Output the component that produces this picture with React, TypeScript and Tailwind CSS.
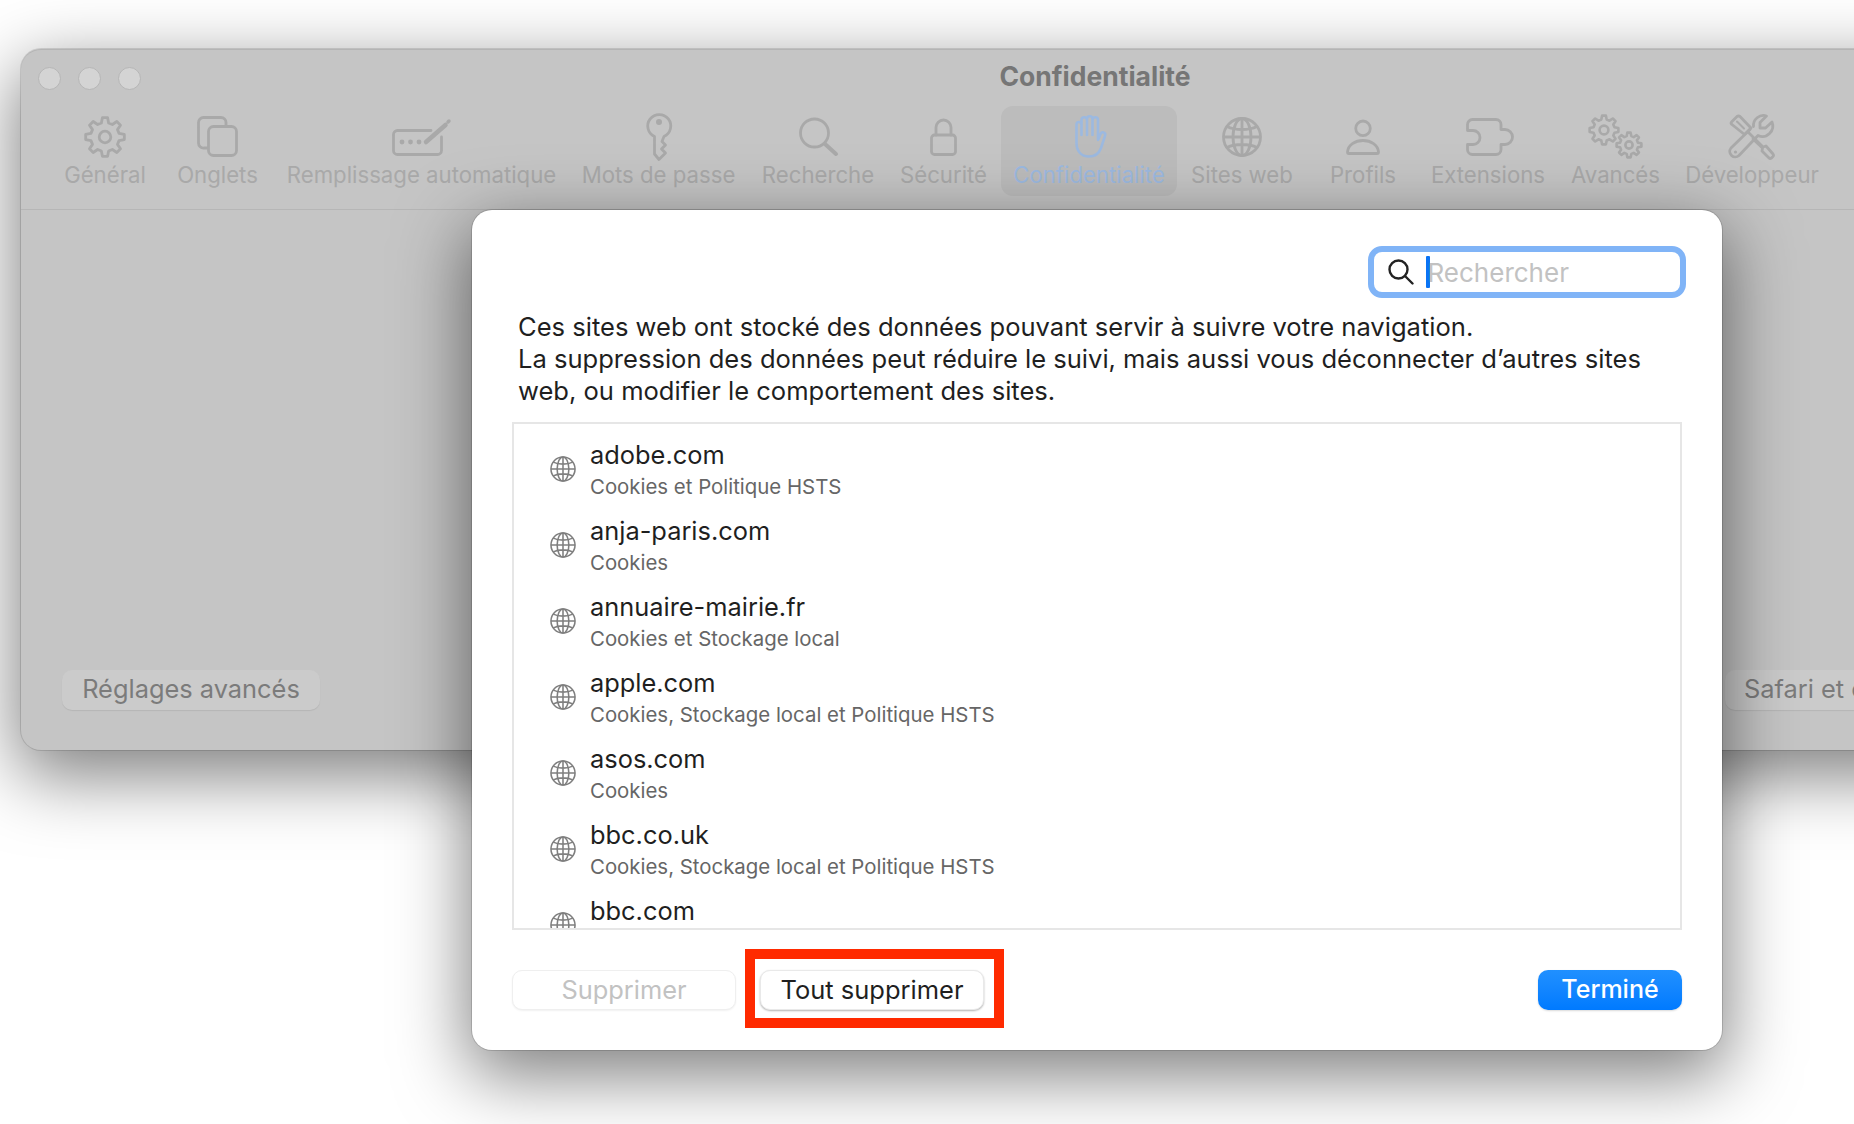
import React from "react";

function gearPath(cx: number, cy: number, R: number, r: number, teeth = 8) {
  const step = (Math.PI * 2) / teeth;
  const pts: string[] = [];
  for (let i = 0; i < teeth; i++) {
    const a = -Math.PI / 2 + i * step;
    const offs: [number, number][] = [
      [r, -0.32],
      [R, -0.17],
      [R, 0.17],
      [r, 0.32],
    ];
    for (const [rad, o] of offs) {
      const t = a + o * step;
      pts.push(`${(cx + rad * Math.cos(t)).toFixed(2)} ${(cy + rad * Math.sin(t)).toFixed(2)}`);
    }
  }
  return "M" + pts.join("L") + "Z";
}

type SvgP = { w: number; h: number; sw?: number; children: React.ReactNode };
function Ico({ w, h, sw = 2.8, children }: SvgP) {
  return (
    <svg
      width={w}
      height={h}
      viewBox={`0 0 ${w} ${h}`}
      fill="none"
      stroke="currentColor"
      strokeWidth={sw}
      strokeLinecap="round"
      strokeLinejoin="round"
      className="overflow-visible"
    >
      {children}
    </svg>
  );
}

const GearIcon = () => (
  <Ico w={42} h={42}>
    <path d={gearPath(21, 21, 19.5, 14.5)} />
    <circle cx={21} cy={21} r={5.8} />
  </Ico>
);
const TabsIcon = () => (
  <Ico w={41} h={41}>
    <path d="M10.5 32 H7 a5 5 0 0 1 -5.5 -5 V6.5 a5 5 0 0 1 5 -5 H24 a5 5 0 0 1 5 5 V10.5" />
    <rect x={11.5} y={10.5} width={28} height={29} rx={5} />
  </Ico>
);
const AutofillIcon = () => (
  <Ico w={59} h={39}>
    <path d="M39 13.5 H5.5 a4 4 0 0 0 -4 4 V33.5 a4 4 0 0 0 4 4 H45.5 a4 4 0 0 0 4 -4 V20" />
    <path d="M34 25 L53.5 8" strokeWidth={4.5} />
    <path d="M56 5 L57 4" strokeWidth={3.5} />
    <g fill="currentColor" stroke="none">
      <circle cx={10} cy={25} r={2.4} />
      <circle cx={18.5} cy={25} r={2.4} />
      <circle cx={27} cy={25} r={2.4} />
    </g>
  </Ico>
);
const KeyIcon = () => (
  <Ico w={26} h={48}>
    <path d="M8.5 23.5 V41 L13 46.5 L19.5 40 L15.5 36 L19.5 32 L16 28.5 L18 23.5 A11.5 11.5 0 1 0 8.5 23.5 Z" />
    <circle cx={13} cy={9} r={3} fill="currentColor" stroke="none" />
  </Ico>
);
const SearchBigIcon = () => (
  <Ico w={39} h={39}>
    <circle cx={15.5} cy={16} r={14} />
    <path d="M26 27 L37 37" strokeWidth={4} />
  </Ico>
);
const LockIcon = () => (
  <Ico w={27} h={38}>
    <rect x={1.5} y={17} width={24} height={19.5} rx={3} />
    <path d="M6 17 V9.5 a7.5 7.5 0 0 1 15 0 V17" />
  </Ico>
);
const HandIcon = () => (
  <Ico w={36} h={43} sw={2.6}>
    <path
      transform="translate(4 0)"
      d="M1.5 28 V9.5 a2.5 2.5 0 0 1 5 0 V20 M6.5 9 V5 a2.7 2.7 0 0 1 5.5 0 V20 M12 5 V4 a2.7 2.7 0 0 1 5.5 0 V20 M17.5 5 a2.7 2.7 0 0 1 5.5 0 V25 L25.5 19 a2.4 2.4 0 0 1 4.6 1.5 L26 33 C24 38.5 20 41.5 14 41.5 C6 41.5 1.5 36 1.5 28"
    />
  </Ico>
);
const GlobeIcon = ({ size = 40, sw = 2.8 }: { size?: number; sw?: number }) => (
  <svg width={size} height={size} viewBox="0 0 40 40" fill="none" stroke="currentColor" strokeWidth={sw}>
    <circle cx={20} cy={20} r={18.5} />
    <ellipse cx={20} cy={20} rx={9} ry={18.5} />
    <path d="M20 1.5 V38.5 M1.5 20 H38.5 M5 9.5 C13 13.5 27 13.5 35 9.5 M5 30.5 C13 26.5 27 26.5 35 30.5" />
  </svg>
);
const ProfileIcon = () => (
  <Ico w={34} h={36}>
    <circle cx={17} cy={9.3} r={7.3} />
    <path d="M1.5 33 C2 26 9 21.5 17 21.5 C25 21.5 32 26 32.5 33 Q32.5 34.5 31 34.5 H3 Q1.5 34.5 1.5 33 Z" />
  </Ico>
);
const PuzzleIcon = () => (
  <Ico w={52} h={38}>
    <path
      transform="translate(4 0)"
      d="M6.5 1.5 H30 a5 5 0 0 1 5 5 V11.5 H39 a7.5 7.5 0 0 1 0 15 H35 V31.5 a5 5 0 0 1 -5 5 H6.5 a5 5 0 0 1 -5 -5 V26.5 H7 a7 7 0 0 0 0 -14 H1.5 V6.5 a5 5 0 0 1 5 -5 Z"
    />
  </Ico>
);
const GearsIcon = () => (
  <Ico w={54} h={43} sw={2.6}>
    <path d={gearPath(15, 15, 14.5, 10.8)} />
    <circle cx={15} cy={15} r={4.4} />
    <path d={gearPath(40, 30, 12.5, 9.2)} />
    <circle cx={40} cy={30} r={3.6} />
  </Ico>
);
const ToolsIcon = () => (
  <Ico w={46} h={46}>
    <path d="M2.5 8 L8 2.5 Q9.5 1.5 11 2.5 L22 14 L15.5 20.5 L3 10.5 Q1.5 9.5 2.5 8 Z" />
    <path d="M8 7.5 L15 14.5" strokeWidth={2} />
    <path d="M19 18 L34 33 L37 32 L44 40 Q45 41.5 44 42.5 L42.5 44 Q41 45 40 44 L33 37 L33.5 34 L24 25" />
    <path d="M24.5 12.5 A10 10 0 0 1 37.5 2 L31 8.5 V14 H36.5 L43 8 A10.5 10.5 0 0 1 29 21.5 L10 41.5 A5.5 5.5 0 0 1 2 34 L21 15.5" />
    <circle cx={6.5} cy={38} r={1.6} fill="currentColor" stroke="none" />
  </Ico>
);
const SmallSearch = () => (
  <svg width={26} height={26} viewBox="0 0 26 26" fill="none" stroke="#222222" strokeWidth={2.4} strokeLinecap="round">
    <circle cx={10.5} cy={10.5} r={9} />
    <path d="M17 17 L24.5 24.5" />
  </svg>
);

const tabs: { label: string; w: string; icon: React.ReactNode; active?: boolean }[] = [
  { label: "Général", w: "w-[108px]", icon: <GearIcon /> },
  { label: "Onglets", w: "w-[113px]", icon: <TabsIcon /> },
  { label: "Remplissage automatique", w: "w-[291px]", icon: <AutofillIcon /> },
  { label: "Mots de passe", w: "w-[179px]", icon: <KeyIcon /> },
  { label: "Recherche", w: "w-[136px]", icon: <SearchBigIcon /> },
  { label: "Sécurité", w: "w-[111px]", icon: <LockIcon /> },
  { label: "Confidentialité", w: "w-[176px]", icon: <HandIcon />, active: true },
  { label: "Sites web", w: "w-[126px]", icon: <GlobeIcon /> },
  { label: "Profils", w: "w-[112px]", icon: <ProfileIcon /> },
  { label: "Extensions", w: "w-[134px]", icon: <PuzzleIcon /> },
  { label: "Avancés", w: "w-[117px]", icon: <GearsIcon /> },
  { label: "Développeur", w: "w-[152px]", icon: <ToolsIcon /> },
  { label: "Drapeaux", w: "w-[152px]", icon: null },
];

const sites = [
  ["adobe.com", "Cookies et Politique HSTS"],
  ["anja-paris.com", "Cookies"],
  ["annuaire-mairie.fr", "Cookies et Stockage local"],
  ["apple.com", "Cookies, Stockage local et Politique HSTS"],
  ["asos.com", "Cookies"],
  ["bbc.co.uk", "Cookies, Stockage local et Politique HSTS"],
  ["bbc.com", "Cookies"],
];

export default function App() {
  return (
    <div className="relative w-[1854px] h-[1124px] overflow-hidden bg-white font-['Inter',sans-serif] pt-[49px] pl-[21px]">
      {/* Background window */}
      <div className="flex flex-col w-[2148px] h-[701px] rounded-[20px] bg-[#c5c5c5] border-t border-[#b4b4b4] shadow-[0_0_0_1px_rgba(0,0,0,0.12),0_22px_70px_4px_rgba(0,0,0,0.5)]">
        <div className="relative h-[56px] flex items-center justify-center">
          <div className="absolute left-[17px] top-[17px] flex gap-[17px]">
            <span className="w-[23px] h-[23px] rounded-full bg-[#d4d4d4] border border-[#b6b6b6]" />
            <span className="w-[23px] h-[23px] rounded-full bg-[#d4d4d4] border border-[#b6b6b6]" />
            <span className="w-[23px] h-[23px] rounded-full bg-[#d4d4d4] border border-[#b6b6b6]" />
          </div>
          <span className="text-[26.5px] font-bold leading-[32px] text-[#767676] -mt-[5px]">Confidentialité</span>
        </div>
        <div className="flex gap-[2px] pl-[30px] h-[104px] pb-[14px] border-b border-[#b6b6b6] shrink-0">
          {tabs.map((t) => (
            <div
              key={t.label}
              className={
                "flex flex-col items-center h-[90px] shrink-0 rounded-[12px] " +
                t.w +
                (t.active ? " bg-[#bcbcbc] text-[#9cb9e0]" : " text-[#a9a9a9]")
              }
            >
              <div className="h-[55px] pt-[6px] flex items-center justify-center">{t.icon}</div>
              <span className="text-[22.2px] leading-[28px] whitespace-nowrap">{t.label}</span>
            </div>
          ))}
        </div>
        <div className="flex-1 flex items-end justify-between px-[41px] pb-[40px]">
          <button className="h-[40px] w-[258px] pb-[2px] rounded-[10px] bg-[#cbcbcb] shadow-[0_1px_1px_rgba(0,0,0,0.08)] text-[25.4px] text-[#7b7b7b]">
            Réglages avancés
          </button>
          <button className="h-[40px] w-[403px] pb-[2px] text-left pl-[19px] rounded-[10px] bg-[#cbcbcb] shadow-[0_1px_1px_rgba(0,0,0,0.08)] text-[25.4px] text-[#7b7b7b]">
            Safari et confidentialité
          </button>
        </div>
      </div>

      {/* Sheet */}
      <div className="absolute left-[472px] top-[210px] w-[1250px] h-[840px] rounded-[20px] bg-white shadow-[0_0_0_1px_rgba(0,0,0,0.14),0_22px_70px_4px_rgba(0,0,0,0.5)] pt-[36px] px-[40px] flex flex-col">
        <div className="flex justify-end -mr-[4px]">
          <div className="w-[318px] h-[52px] rounded-[14px] border-[6px] border-[#80b4f7] bg-white flex items-center pl-[14px]">
            <SmallSearch />
            <span className="ml-[12px] w-[3.5px] h-[32px] bg-[#0a74f5] rounded-[1px]" />
            <span className="-ml-[2px] mt-[2px] text-[26px] leading-[32px] text-[#c2c2c2]">Rechercher</span>
          </div>
        </div>
        <p className="mt-[13px] pl-[6px] text-[25.55px] leading-[32px] text-[#1f1f1f]">
          Ces sites web ont stocké des données pouvant servir à suivre votre navigation.
          <br />
          La suppression des données peut réduire le suivi, mais aussi vous déconnecter d’autres sites
          <br />
          web, ou modifier le comportement des sites.
        </p>
        <div className="mt-[15px] h-[508px] border-2 border-[#e6e6e6] overflow-hidden pt-[7px]">
          {sites.map(([name, sub]) => (
            <div key={name} className="h-[76px] flex items-start pl-[36px] shrink-0">
              <div className="mt-[25px] text-[#7f7f7f]">
                <GlobeIcon size={26} sw={2.4} />
              </div>
              <div className="ml-[14px] pt-[8px]">
                <div className="text-[25.4px] leading-[32px] text-[#1f1f1f]">{name}</div>
                <div className="text-[20.4px] leading-[32px] text-[#666666]">{sub}</div>
              </div>
            </div>
          ))}
        </div>
        <div className="mt-[40px] flex items-center">
          <button className="w-[224px] h-[40px] pb-[3px] rounded-[10px] border border-[#efefef] bg-white shadow-[0_1px_2px_rgba(0,0,0,0.06)] text-[25.4px] text-[#c2c2c2]">
            Supprimer
          </button>
          <div className="relative ml-[24px]">
            <button className="block w-[224px] h-[40px] pb-[3px] rounded-[10px] border border-[#e9e9e9] bg-white shadow-[0_1px_2px_rgba(0,0,0,0.3)] text-[25.5px] text-[#1f1f1f]">
              Tout supprimer
            </button>
            <div className="absolute -left-[15px] -right-[20px] -top-[21px] -bottom-[18px] border-[10px] border-[#ff2a00]" />
          </div>
          <button className="ml-auto w-[144px] h-[40px] rounded-[10px] bg-gradient-to-b from-[#2090ff] to-[#007aff] shadow-[0_1px_2px_rgba(0,0,0,0.15)] text-[25px] font-medium text-white">
            Terminé
          </button>
        </div>
      </div>
    </div>
  );
}
